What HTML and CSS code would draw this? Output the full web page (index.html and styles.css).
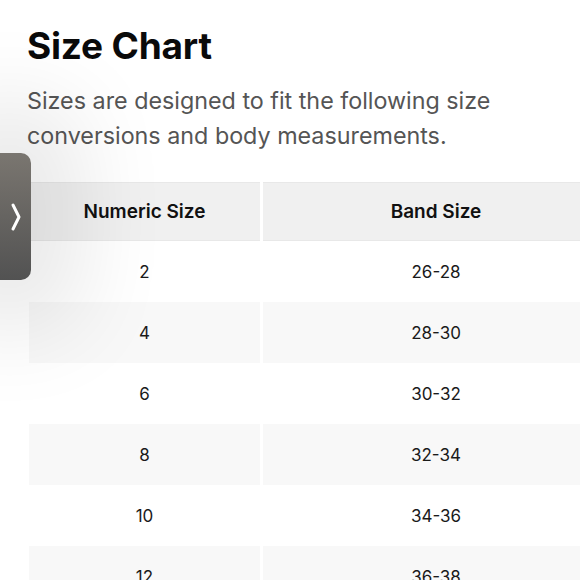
FILE: index.html
```html
<!DOCTYPE html>
<html>
<head>
<meta charset="utf-8">
<link rel="stylesheet" href="styles.css">
</head>
<body>
<div class="page">
  <h1 class="title">Size Chart</h1>
  <p class="intro">Sizes are designed to fit the following size conversions and body measurements.</p>
  <table class="chart">
    <thead>
      <tr><th>Numeric Size</th><th>Band Size</th></tr>
    </thead>
    <tbody>
      <tr><td>2</td><td>26-28</td></tr>
      <tr><td>4</td><td>28-30</td></tr>
      <tr><td>6</td><td>30-32</td></tr>
      <tr><td>8</td><td>32-34</td></tr>
      <tr><td>10</td><td>34-36</td></tr>
      <tr><td>12</td><td>36-38</td></tr>
    </tbody>
  </table>
</div>
<button class="tab" aria-label="Open">
  <svg width="12" height="30" viewBox="0 0 12 30"><path d="M3 3 L9 15 L3 27" fill="none" stroke="#fff" stroke-width="3" stroke-linecap="round" stroke-linejoin="round"/></svg>
</button>
</body>
</html>
```
FILE: styles.css
```css
html, body {
  margin: 0;
  padding: 0;
  background: #fff;
  overflow: hidden;
}
body {
  font-family: Inter, "Noto Sans", sans-serif;
  color: #111;
  width: 580px;
  height: 580px;
}
.page {
  padding: 24px 0 0 27px;
}
.title {
  margin: 0;
  font-size: 37px;
  font-weight: 700;
  line-height: 44px;
  letter-spacing: -0.2px;
  color: #0a0a0a;
}
.intro {
  margin: 15px 0 0 0;
  font-size: 23.3px;
  line-height: 35px;
  color: #555;
  width: 500px;
  font-weight: 400;
}
.chart {
  margin-top: 29px;
  border-collapse: separate;
  border-spacing: 3px 0;
  margin-left: -1px;
  width: 586px;
}
.chart th, .chart td {
  text-align: center;
  padding: 0;
}
.chart th {
  height: 57px;
  background: #f0f0f0;
  font-size: 19px;
  font-weight: 600;
  color: #111;
  border-top: 1px solid #e8e8e8;
  border-bottom: 1px solid #e8e8e8;
}
.chart th:first-child, .chart td:first-child {
  width: 231px;
}
.chart td {
  height: 61px;
  font-size: 17px;
  color: #1a1a1a;
}
.chart tbody tr:nth-child(even) td {
  background: #f8f8f8;
}
.tab {
  position: absolute;
  left: -12px;
  top: 153px;
  width: 43px;
  height: 127px;
  border: none;
  border-radius: 10px;
  background: linear-gradient(#7a7670, #525252);
  box-shadow: 0 0 90px 50px rgba(0, 0, 0, 0.09);
  display: flex;
  align-items: center;
  justify-content: center;
  padding: 0 0 0 12px;
}
```
